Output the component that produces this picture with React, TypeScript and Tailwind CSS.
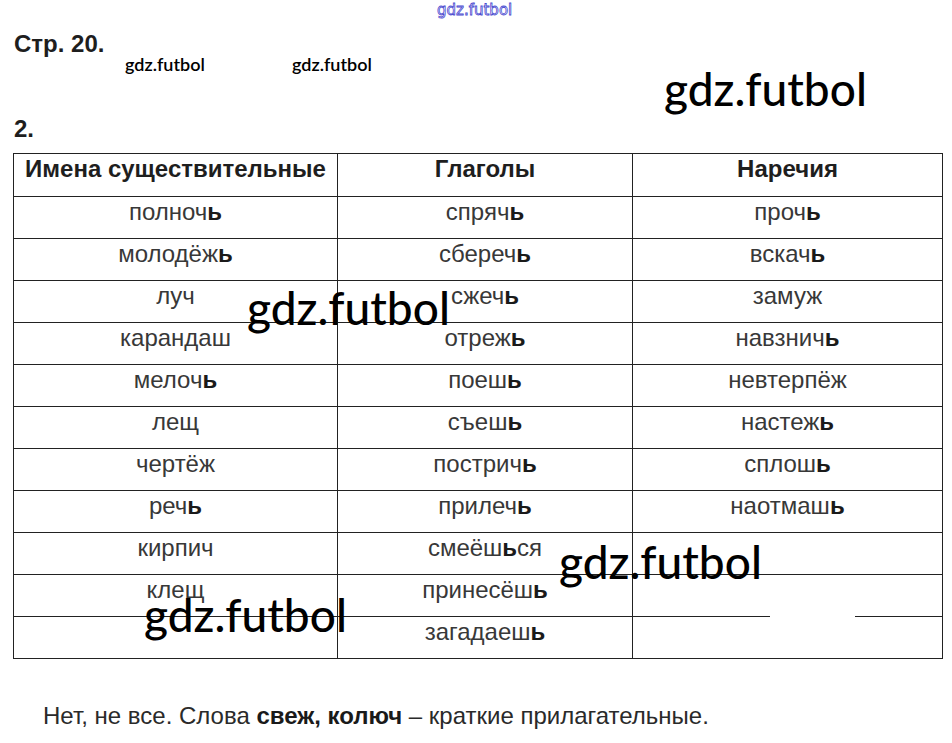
import React from 'react';

type Word = { base: string; soft?: string; tail?: string };

// строки таблицы: основа + мягкий знак жирным + хвост
const rows: (Word | null)[][] = [
  [{ base: 'полноч', soft: 'ь' }, { base: 'спряч', soft: 'ь' }, { base: 'проч', soft: 'ь' }],
  [{ base: 'молодёж', soft: 'ь' }, { base: 'сбереч', soft: 'ь' }, { base: 'вскач', soft: 'ь' }],
  [{ base: 'луч' }, { base: 'сжеч', soft: 'ь' }, { base: 'замуж' }],
  [{ base: 'карандаш' }, { base: 'отреж', soft: 'ь' }, { base: 'навзнич', soft: 'ь' }],
  [{ base: 'мелоч', soft: 'ь' }, { base: 'поеш', soft: 'ь' }, { base: 'невтерпёж' }],
  [{ base: 'лещ' }, { base: 'съеш', soft: 'ь' }, { base: 'настеж', soft: 'ь' }],
  [{ base: 'чертёж' }, { base: 'пострич', soft: 'ь' }, { base: 'сплош', soft: 'ь' }],
  [{ base: 'реч', soft: 'ь' }, { base: 'прилеч', soft: 'ь' }, { base: 'наотмаш', soft: 'ь' }],
  [{ base: 'кирпич' }, { base: 'смеёш', soft: 'ь', tail: 'ся' }, null],
  [{ base: 'клещ' }, { base: 'принесёш', soft: 'ь' }, null],
  [null, { base: 'загадаеш', soft: 'ь' }, null],
];

function Cell({ w }: { w: Word | null }) {
  return (
    <td className="border border-[#222] h-[42px] align-top pt-[1px] text-center leading-[28px]">
      {w && (
        <>
          {w.base}
          {w.soft && <b className="font-bold text-[#1a1a1a]">{w.soft}</b>}
          {w.tail}
        </>
      )}
    </td>
  );
}

function Mark({ className }: { className: string }) {
  return (
    <div
      className={`absolute font-['Lato','Open_Sans',sans-serif] text-black leading-none pointer-events-none ${className}`}
    >
      gdz.futbol
    </div>
  );
}

const th = 'border border-[#222] h-[43px] align-top pt-[1px] font-bold leading-[28px] text-[#1e1e1e]';

export default function App() {
  return (
    <div className="relative w-[952px] h-[743px] bg-white overflow-hidden font-['Liberation_Sans',Arial,sans-serif] text-[#383838]">
      <div className="flex flex-col pt-[30px]">
        <div className="pl-[14px] text-[24px] font-bold leading-[28px] text-[#1e1e1e]">Стр. 20.</div>
        <div className="pl-[14px] mt-[57px] text-[24px] font-bold leading-[28px] text-[#1e1e1e]">2.</div>

        <table className="ml-[13px] mt-[10px] border-collapse text-[24px] table-fixed w-[929px]">
          <colgroup>
            <col className="w-[324px]" />
            <col className="w-[295px]" />
            <col className="w-[310px]" />
          </colgroup>
          <thead>
            <tr>
              <th className={th}>Имена существительные</th>
              <th className={th}>Глаголы</th>
              <th className={th}>Наречия</th>
            </tr>
          </thead>
          <tbody>
            {rows.map((r, i) => (
              <tr key={i}>
                <Cell w={r[0]} />
                <Cell w={r[1]} />
                <Cell w={r[2]} />
              </tr>
            ))}
          </tbody>
        </table>

        <p className="pl-[43px] mt-[43px] text-[24px] leading-[28px] text-[#2a2a2a]">
          Нет, не все. Слова <b className="text-[#1a1a1a]">свеж, колюч</b> – краткие прилагательные.
        </p>
      </div>

      {/* водяные знаки поверх */}
      <div className="absolute left-[437px] top-[3px] text-[15px] font-['DejaVu_Sans',sans-serif] text-white [-webkit-text-stroke:0.8px_#4b4bd0] leading-none">
        gdz.futbol
      </div>
      <Mark className="left-[125px] top-[55px] text-[18px] font-semibold" />
      <Mark className="left-[292px] top-[55px] text-[18px] font-semibold" />
      <Mark className="left-[664px] top-[66px] text-[46px] font-medium" />
      <Mark className="left-[247px] top-[285px] text-[46px] font-medium" />
      <Mark className="left-[559px] top-[539px] text-[46px] font-medium" />
      <Mark className="left-[144px] top-[592px] text-[46px] font-medium" />

      {/* разрыв линии от стёртого знака */}
      <div className="absolute left-[770px] top-[615px] w-[85px] h-[4px] bg-white" />
    </div>
  );
}
